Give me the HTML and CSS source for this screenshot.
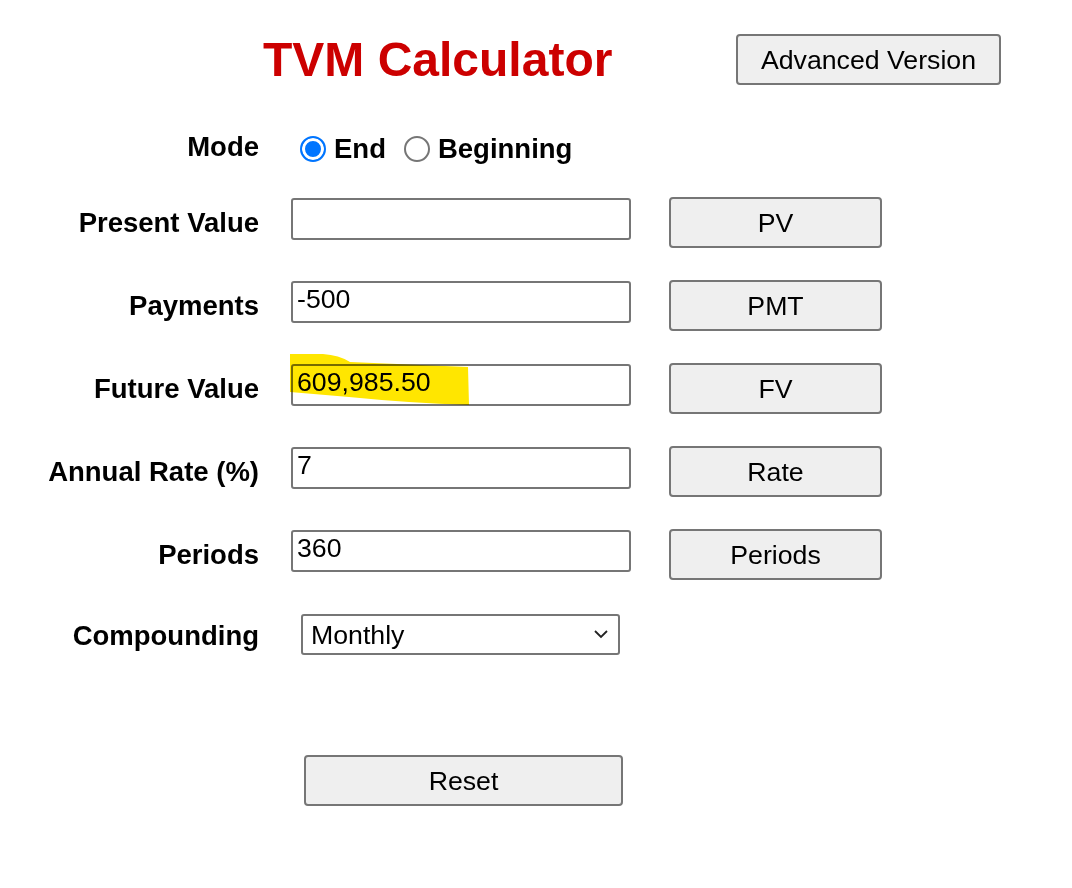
FILE: index.html
```html
<!DOCTYPE html>
<html lang="en">
<head>
<meta charset="utf-8">
<title>TVM Calculator</title>
<link rel="stylesheet" href="styles.css">
</head>
<body>
<div class="page">
  <header class="top">
    <h1 class="title">TVM Calculator</h1>
    <button class="btn btn-adv" type="button">Advanced Version</button>
  </header>

  <form class="calc">
    <div class="row row-mode">
      <span class="lbl">Mode</span>
      <div class="modes">
        <label class="opt"><input class="radio" type="radio" name="mode" checked>End</label>
        <label class="opt"><input class="radio" type="radio" name="mode">Beginning</label>
      </div>
    </div>

    <div class="row">
      <span class="lbl">Present Value</span>
      <span class="field"><input class="inp" type="text" value=""></span>
      <button class="btn btn-calc" type="button">PV</button>
    </div>

    <div class="row">
      <span class="lbl">Payments</span>
      <span class="field"><input class="inp" type="text" value="-500"></span>
      <button class="btn btn-calc" type="button">PMT</button>
    </div>

    <div class="row">
      <span class="lbl">Future Value</span>
      <span class="field">
        <input class="inp" type="text" value="609,985.50">
        <svg class="marker" width="182" height="56" viewBox="0 0 182 56" aria-hidden="true">
          <path d="M1 2 L34 2 Q50 3 61 10 L179 15 L180 53 Q120 51 60 45 L1 40 Z" fill="#ffe600"/>
        </svg>
      </span>
      <button class="btn btn-calc" type="button">FV</button>
    </div>

    <div class="row">
      <span class="lbl">Annual Rate (%)</span>
      <span class="field"><input class="inp" type="text" value="7"></span>
      <button class="btn btn-calc" type="button">Rate</button>
    </div>

    <div class="row">
      <span class="lbl">Periods</span>
      <span class="field"><input class="inp" type="text" value="360"></span>
      <button class="btn btn-calc" type="button">Periods</button>
    </div>

    <div class="row row-comp">
      <span class="lbl">Compounding</span>
      <span class="selwrap">
        <select class="sel">
          <option>Monthly</option>
          <option>Quarterly</option>
          <option>Annually</option>
        </select>
        <svg class="chev" width="16" height="10" viewBox="0 0 16 10" aria-hidden="true">
          <path d="M2 2 L8 8 L14 2" fill="none" stroke="#222" stroke-width="1.8"/>
        </svg>
      </span>
    </div>

    <div class="row row-reset">
      <span></span>
      <button class="btn btn-reset" type="reset">Reset</button>
    </div>
  </form>
</div>
</body>
</html>
```

FILE: styles.css
```css
html, body {
  margin: 0;
  padding: 0;
  background: #ffffff;
}

body {
  font-family: "Liberation Sans", Arial, sans-serif;
  color: #000;
}

.page {
  width: 1072px;
}

.top {
  display: grid;
  grid-template-columns: 473px 265px;
  padding-left: 263px;
  height: 114px;
  align-items: start;
}

.title {
  margin: 33px 0 0 0;
  font-size: 48px;
  line-height: 54px;
  font-weight: bold;
  color: #cc0000;
  white-space: nowrap;
}

.btn {
  box-sizing: border-box;
  font-family: "Liberation Sans", Arial, sans-serif;
  font-size: 26.7px;
  line-height: 30px;
  color: #000;
  background: #efefef;
  border: 2px solid #767676;
  border-radius: 4px;
  height: 51px;
  padding: 0;
  margin: 0;
  cursor: pointer;
}

.btn-adv {
  width: 265px;
  margin-top: 34px;
}

.calc {
  display: flex;
  flex-direction: column;
}

.row {
  display: grid;
  grid-template-columns: 259px 346px 213px;
  column-gap: 32px;
  align-items: start;
  height: 83px;
}

.lbl {
  text-align: right;
  font-weight: bold;
  font-size: 27.5px;
  line-height: 31px;
  margin-top: 10px;
  white-space: nowrap;
}

.field {
  position: relative;
  display: block;
  width: 340px;
  height: 42px;
  margin-top: 1px;
}

.inp {
  box-sizing: border-box;
  display: block;
  width: 340px;
  height: 42px;
  margin: 0;
  padding: 0 5px 5px 4px;
  border: 2px solid #767676;
  border-radius: 3px;
  background: #fff;
  font-family: "Liberation Sans", Arial, sans-serif;
  font-size: 26.7px;
  color: #000;
  outline: none;
}

.marker {
  position: absolute;
  left: -2px;
  top: -12px;
  mix-blend-mode: multiply;
  pointer-events: none;
}

.btn-calc {
  width: 213px;
}

/* Mode row */
.row-mode .lbl {
  margin-top: 17px;
}

.modes {
  display: flex;
  align-items: center;
  padding-left: 9px;
  margin-top: 19px;
  column-gap: 18px;
}

.opt {
  display: flex;
  align-items: center;
  font-weight: bold;
  font-size: 27.5px;
  line-height: 31px;
  white-space: nowrap;
}

.radio {
  appearance: none;
  -webkit-appearance: none;
  box-sizing: border-box;
  width: 26px;
  height: 26px;
  margin: 0 8px 0 0;
  border: 2px solid #767676;
  border-radius: 50%;
  background: #fff;
}

.radio:checked {
  border-color: #0075ff;
  background: #0075ff;
  box-shadow: inset 0 0 0 3px #ffffff;
}

/* Compounding row */
.row-comp .lbl {
  margin-top: 8px;
}

.selwrap {
  position: relative;
  display: block;
  width: 319px;
  height: 41px;
  margin: 2px 0 0 10px;
}

.sel {
  appearance: none;
  -webkit-appearance: none;
  box-sizing: border-box;
  display: block;
  width: 319px;
  height: 41px;
  margin: 0;
  padding: 0 30px 0 8px;
  border: 2px solid #767676;
  border-radius: 3px;
  background: #fff;
  font-family: "Liberation Sans", Arial, sans-serif;
  font-size: 26.7px;
  color: #000;
  outline: none;
}

.chev {
  position: absolute;
  right: 11px;
  top: 15px;
  pointer-events: none;
}

/* Reset row */
.row-reset {
  margin-top: 60px;
}

.btn-reset {
  width: 319px;
  margin-left: 13px;
}
```
